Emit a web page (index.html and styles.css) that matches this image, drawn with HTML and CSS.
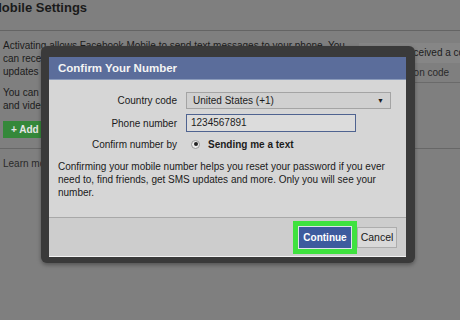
FILE: index.html
```html
<!DOCTYPE html>
<html lang="en">
<head>
<meta charset="UTF-8">
<meta name="viewport" content="width=device-width, initial-scale=1.0">
<title>Mobile Settings</title>
<link rel="stylesheet" href="styles.css">
</head>
<body>

<div class="page-head">
    <h2>Mobile Settings</h2>
</div>

<div class="page-body">
    <div class="left-col">
        <p>Activating allows Facebook Mobile to send text messages to your phone. You can receive notifications for friend requests, messages, Wall posts, and status updates from your friends.</p>
        <p>You can also update your status, search for phone numbers, or upload photos and videos from your phone.</p>
        <span class="add-btn">+ Add a Phone</span>
    </div>

    <div class="right-col">
        <div class="code-note">Already received a code?</div>
        <div class="code-field">Confirmation code</div>
    </div>

    <div class="divider"></div>

    <a class="learn" href="#">Learn more</a>
</div>

<!-- confirm dialog sits over the page -->
<div class="dialog">
    <div class="dialog-inner">
        <div class="dialog-title">Confirm Your Number</div>

        <div class="dialog-body">
            <div class="form-grid">
                <label>Country code</label>
                <div class="select-box">
                    <span>United States (+1)</span>
                    <span class="arrow">&#9660;</span>
                </div>

                <label>Phone number</label>
                <div class="phone-box">1234567891</div>

                <label>Confirm number by</label>
                <div class="radio-row">
                    <span class="radio"><span class="dot"></span></span>
                    <b>Sending me a text</b>
                </div>
            </div>

            <p class="note">Confirming your mobile number helps you reset your password if you ever need to, find friends, get SMS updates and more. Only you will see your number.</p>
        </div>

        <div class="dialog-foot">
            <span class="highlight"><button class="btn-continue">Continue</button></span>
            <button class="btn-cancel">Cancel</button>
        </div>
    </div>
</div>

</body>
</html>
```

FILE: styles.css
```css
body {
    margin: 0;
    background-color: #7f7f7f;
    font-family: "Liberation Sans", Arial, sans-serif;
    font-size: 10px;
    color: #1c1c1c;
    overflow: hidden;
}
.page-head {
    height: 30px;
    border-bottom: 1px solid #646464;
}
.page-head h2 {
    margin: 0 0 0 -9px;
    font-size: 13px;
    line-height: 15px;
    color: #1a1a1a;
}
.page-body {
    display: grid;
    grid-template-columns: 352px 1fr;
    column-gap: 7px;
}
.left-col {
    padding-left: 3px;
    padding-top: 8px;
}
.left-col p {
    margin: 0 0 8px 0;
    line-height: 13px;
}
.add-btn {
    display: inline-block;
    margin-top: 1px;
    height: 17px;
    line-height: 17px;
    padding: 0 8px;
    background-color: #35883a;
    color: #e6e6e6;
    font-weight: bold;
}
.right-col {
    padding-top: 12px;
    min-width: 0;
    overflow: hidden;
}
.code-note {
    height: 20px;
    line-height: 20px;
    padding-left: 9px;
    background-color: #868686;
    white-space: nowrap;
}
.code-field {
    height: 19px;
    line-height: 19px;
    padding-left: 9px;
    border-bottom: 1px solid #6a6a6a;
    color: #2a2a2a;
    white-space: nowrap;
}
.divider {
    grid-column: 1 / 3;
    margin-top: 10px;
    border-top: 1px solid #676767;
}
.learn {
    grid-column: 1 / 3;
    margin-top: 8px;
    padding-left: 3px;
    color: #2a2a2a;
    text-decoration: none;
    line-height: 13px;
}

.dialog {
    position: absolute;
    left: 41px;
    top: 46px;
    width: 374px;
    height: 217px;
    box-sizing: border-box;
    padding: 11px 9px 7px 8px;
    background-color: #3a3a3a;
    border-radius: 6px;
    box-shadow: 0 2px 4px rgba(0, 0, 0, 0.35);
}
.dialog-inner {
    background-color: #d6d6d6;
    border-bottom: 1px solid #f2f2f2;
}
.dialog-title {
    height: 22px;
    line-height: 23px;
    padding-left: 9px;
    background-color: #5b6d9b;
    border-bottom: 1px solid #8a9aba;
    color: #f4f4f4;
    font-size: 11.5px;
    font-weight: bold;
}
.dialog-body {
    height: 137px;
    box-sizing: border-box;
    padding: 12px 9px 0 9px;
}
.form-grid {
    display: grid;
    grid-template-columns: 119px 1fr;
    column-gap: 9px;
    row-gap: 5px;
    align-items: center;
}
.form-grid label {
    text-align: right;
    color: #1a1a1a;
}
.select-box {
    width: 205px;
    height: 17px;
    box-sizing: border-box;
    display: flex;
    justify-content: space-between;
    align-items: center;
    padding: 0 6px 0 6px;
    background-color: #d0d0d0;
    border: 1px solid #a4a4a4;
}
.select-box .arrow {
    font-size: 7px;
}
.phone-box {
    width: 170px;
    height: 18px;
    box-sizing: border-box;
    line-height: 16px;
    padding-left: 4px;
    background-color: #dcdcdc;
    border: 1px solid #4f6390;
}
.radio-row {
    display: flex;
    align-items: center;
    gap: 8px;
    height: 14px;
    padding-left: 5px;
}
.radio {
    width: 9px;
    height: 9px;
    box-sizing: border-box;
    border: 1px solid #9a9a9a;
    border-radius: 50%;
    background-color: #ececec;
    display: flex;
    align-items: center;
    justify-content: center;
}
.dot {
    width: 4px;
    height: 4px;
    border-radius: 50%;
    background-color: #222;
}
.note {
    margin: 9px 0 0 0;
    line-height: 13px;
    color: #1a1a1a;
}
.dialog-foot {
    height: 38px;
    border-top: 1px solid #a8a8a8;
    background-color: #cdcdcd;
    display: flex;
    justify-content: flex-end;
    align-items: center;
    padding-right: 9px;
}
.highlight {
    display: inline-block;
    border: 5px solid #3fe23f;
    line-height: 0;
}
.btn-continue {
    width: 54px;
    height: 23px;
    padding: 0;
    background-color: #3d5b9e;
    border: 1px solid #dfe3ec;
    color: #fff;
    font-family: "Liberation Sans", Arial, sans-serif;
    font-size: 10px;
    font-weight: bold;
}
.btn-cancel {
    width: 40px;
    height: 21px;
    padding: 0;
    background-color: #d9d9d9;
    border: 1px solid #adadad;
    color: #1a1a1a;
    font-family: "Liberation Sans", Arial, sans-serif;
    font-size: 10.5px;
}
```
